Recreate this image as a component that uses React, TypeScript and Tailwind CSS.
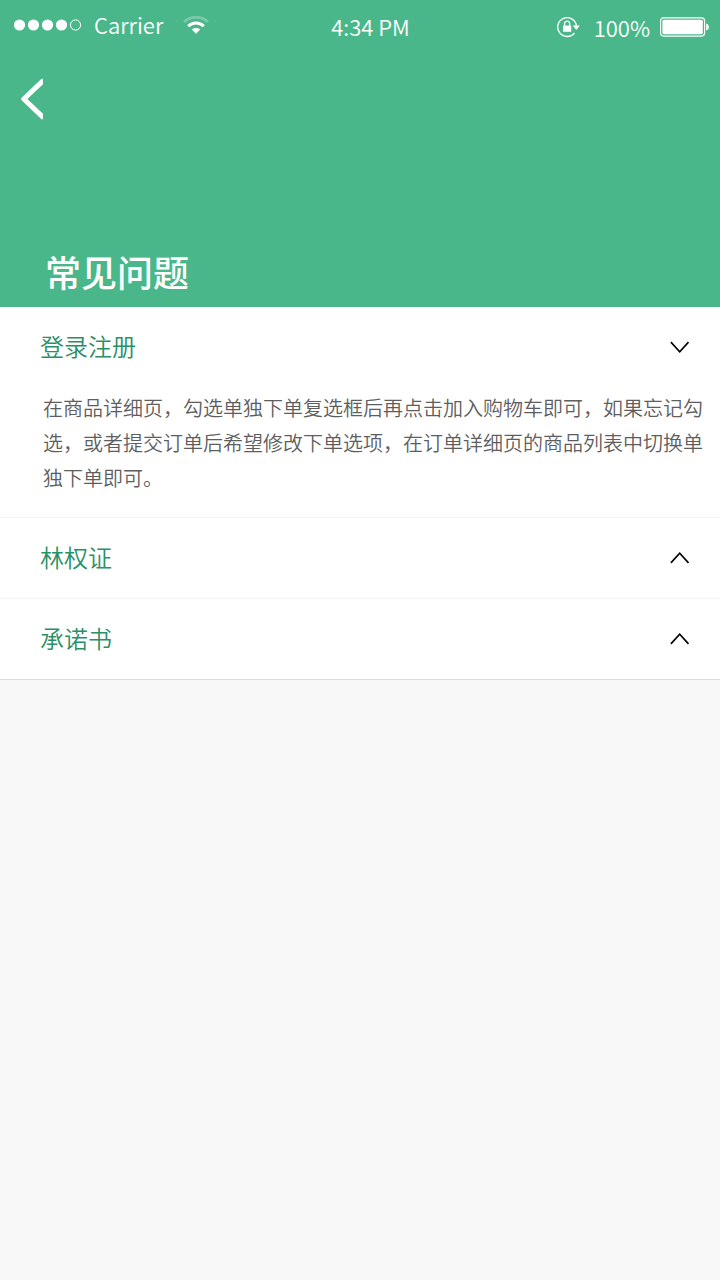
import type { FC } from 'react';
import { useState } from 'react';

interface FaqItem {
  id: string;
  title: string;
  answer: string;
}

const FAQ_ITEMS: FaqItem[] = [
  {
    id: 'login',
    title: '登录注册',
    answer:
      '在商品详细页，勾选单独下单复选框后再点击加入购物车即可，如果忘记勾选，或者提交订单后希望修改下单选项，在订单详细页的商品列表中切换单独下单即可。',
  },
  { id: 'forest', title: '林权证', answer: '' },
  { id: 'commitment', title: '承诺书', answer: '' },
];

const StatusBar: FC = () => (
  <div className="grid h-[54px] grid-cols-[1fr_auto_1fr] items-center pl-3.5 pr-[11px] text-[22px] leading-8 font-[350]">
    <div className="flex items-center pb-1">
      <svg width="68" height="12" viewBox="0 0 68 12" fill="white" aria-hidden="true">
        <circle cx="5.5" cy="6" r="5.6" />
        <circle cx="19.5" cy="6" r="5.6" />
        <circle cx="33.5" cy="6" r="5.6" />
        <circle cx="47.5" cy="6" r="5.6" />
        <circle cx="61.5" cy="6" r="5.1" fill="none" stroke="white" />
      </svg>
      <span className="ml-3 pb-0.5">Carrier</span>
      <svg className="ml-5" width="26" height="18" viewBox="0 0 26 18" fill="none" aria-hidden="true">
        <path d="M1 6C7.5 -0.2 18.5 -0.2 25 6" stroke="white" strokeOpacity="0.25" strokeWidth="3" />
        <path d="M5.2 10.2C9.5 5.8 16.5 5.8 20.8 10.2" stroke="white" strokeWidth="3" />
        <path d="M13 17.8L8.8 13.4C11.2 11.4 14.8 11.4 17.2 13.4Z" fill="white" />
      </svg>
    </div>
    <span className="pb-0.5 pl-[18px]">4:34 PM</span>
    <div className="flex items-center justify-end">
      <svg width="24" height="22" viewBox="0 0 24 22" fill="none" aria-hidden="true">
        <path d="M20.4 9.6A9.4 9.4 0 1 0 18.4 17" stroke="white" strokeWidth="1.4" />
        <path d="M16.8 9.6H23.8L20.3 14Z" fill="white" />
        <path d="M7 9.6H15.2V15.8H7Z" fill="white" />
        <path d="M8.6 10V7.6A2.5 2.5 0 0 1 13.6 7.6V10" stroke="white" strokeWidth="1.3" />
      </svg>
      <span className="ml-3.5">100%</span>
      <svg className="ml-2.5" width="49" height="20" viewBox="0 0 49 20" fill="none" aria-hidden="true">
        <rect x="0.6" y="0.9" width="44" height="18.2" rx="3" stroke="white" strokeWidth="1.1" />
        <rect x="2.4" y="2.7" width="40.4" height="14.6" rx="1.6" fill="white" />
        <path d="M46.2 6.4C48 7 48.8 8.4 48.8 10C48.8 11.6 48 13 46.2 13.6Z" fill="white" />
      </svg>
    </div>
  </div>
);

const Chevron: FC<{ open: boolean }> = ({ open }) => (
  <svg width="20" height="14" viewBox="0 0 20 14" fill="none" stroke="black" strokeWidth="1.6" aria-hidden="true">
    <path d={open ? 'M0.9 2.1L9.7 11.9L18.5 2.1' : 'M0.9 11.9L9.7 2.1L18.5 11.9'} />
  </svg>
);

const App: FC = () => {
  const [openId, setOpenId] = useState<string | null>('login');

  return (
    <div className="min-h-screen bg-[#f8f8f8] font-['Noto_Sans_CJK_SC',sans-serif]">
      <header className="bg-[#4ab78a] text-white">
        <StatusBar />
        <button type="button" aria-label="返回" className="mt-6 ml-5 block">
          <svg width="23" height="42" viewBox="0 0 23 42" fill="none" stroke="white" strokeWidth="5" aria-hidden="true">
            <path d="M22.4 3.4L3.8 21L22.4 38.6" strokeLinecap="round" strokeLinejoin="round" />
          </svg>
        </button>
        <h1 className="pt-[125px] pb-[9px] pl-[45px] text-4xl leading-[53px] font-medium">常见问题</h1>
      </header>

      <main className="border-b border-[#dcdcdc] bg-white">
        {FAQ_ITEMS.map((item) => {
          const open = item.id === openId;
          return (
            <section key={item.id} className="border-t border-[#f4f4f4] first:border-t-0">
              <h2>
                <button
                  type="button"
                  aria-expanded={open}
                  onClick={() => setOpenId(open ? null : item.id)}
                  className="flex h-20 w-full items-center justify-between pr-[30px] pl-10 text-2xl font-[350] text-[#2a9065]"
                >
                  <span className="pb-0.5">{item.title}</span>
                  <Chevron open={open} />
                </button>
              </h2>
              {open && item.answer && (
                <p className="pt-[3px] pr-4 pb-[22px] pl-[43px] text-xl leading-[35px] font-[350] text-[#5e5e5e]">
                  {item.answer}
                </p>
              )}
            </section>
          );
        })}
      </main>
    </div>
  );
};

export default App;
